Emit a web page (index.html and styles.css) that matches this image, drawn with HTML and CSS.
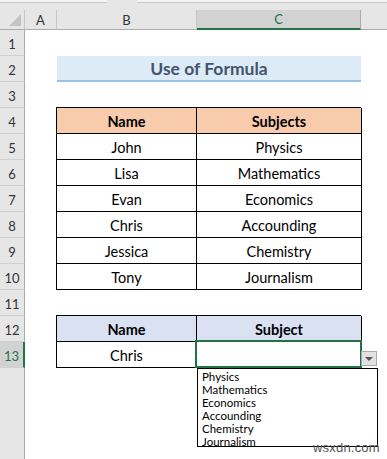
FILE: index.html
```html
<!DOCTYPE html>
<html>
<head>
<meta charset="utf-8">
<link rel="stylesheet" href="styles.css">
</head>
<body>
<div class="app">
  <div class="topstrip"><div class="seg seg1"></div><div class="seg seg2"></div></div>
  <div class="sheet">
    <div class="corner"><span class="tri"></span></div>
    <div class="colhead">A</div>
    <div class="colhead">B</div>
    <div class="colhead active">C</div>
    <div class="colhead last"></div>

    <div class="rownum r1">1</div>
    <div class="rownum r2">2</div>
    <div class="rownum r3">3</div>
    <div class="rownum r4">4</div>
    <div class="rownum r5">5</div>
    <div class="rownum r6">6</div>
    <div class="rownum r7">7</div>
    <div class="rownum r8">8</div>
    <div class="rownum r9">9</div>
    <div class="rownum r10">10</div>
    <div class="rownum r11">11</div>
    <div class="rownum r12">12</div>
    <div class="rownum r13 active">13</div>
    <div class="rownum rest"></div>

    <div class="title">Use of Formula</div>

    <div class="tbl tbl1">
      <div class="cell hd peach">Name</div><div class="cell hd peach">Subjects</div>
      <div class="cell">John</div><div class="cell">Physics</div>
      <div class="cell">Lisa</div><div class="cell">Mathematics</div>
      <div class="cell">Evan</div><div class="cell">Economics</div>
      <div class="cell">Chris</div><div class="cell">Accounding</div>
      <div class="cell">Jessica</div><div class="cell">Chemistry</div>
      <div class="cell">Tony</div><div class="cell">Journalism</div>
    </div>

    <div class="tbl tbl2">
      <div class="cell hd blue">Name</div><div class="cell hd blue">Subject</div>
      <div class="cell">Chris</div><div class="cell selected"></div>
    </div>

    <div class="ddbtn"><span class="ddtri"></span></div>
    <ul class="ddlist">
      <li>Physics</li>
      <li>Mathematics</li>
      <li>Economics</li>
      <li>Accounding</li>
      <li>Chemistry</li>
      <li>Journalism</li>
    </ul>
    <div class="watermark">wsxdn.com</div>
  </div>
</div>
</body>
</html>
```
FILE: styles.css
```css
html, body {
  margin: 0;
  padding: 0;
  background: #ffffff;
}
.app {
  width: 387px;
  height: 459px;
  overflow: hidden;
  font-family: Lato, "Open Sans", sans-serif;
  background: #ffffff;
}
.topstrip {
  height: 10px;
  background: #e6e6e6;
  display: flex;
  gap: 30px;
}
.seg {
  height: 3px;
  background: #f3f3f3;
  border-bottom: 1px solid #c9c9c9;
  box-sizing: border-box;
}
.seg1 { width: 107px; }
.seg2 { flex: 1; }
.sheet {
  position: relative;
  display: grid;
  grid-template-columns: 25px 32px 140px 164px 26px;
  grid-template-rows: 20px repeat(13, 26px) 1fr;
  height: 449px;
}
.corner {
  grid-column: 1;
  grid-row: 1;
  background: #e6e6e6;
  border-right: 1px solid #c6c6c6;
  border-bottom: 1px solid #ababab;
  box-sizing: border-box;
  position: relative;
}
.tri {
  position: absolute;
  right: 3px;
  bottom: 3px;
  width: 0;
  height: 0;
  border-left: 12px solid transparent;
  border-bottom: 12px solid #c3c3c3;
}
.colhead {
  grid-row: 1;
  background: #e6e6e6;
  border-right: 1px solid #c6c6c6;
  border-bottom: 1px solid #ababab;
  box-sizing: border-box;
  font-size: 13px;
  color: #333;
  display: flex;
  align-items: center;
  justify-content: center;
}
.colhead.active {
  background: #d2d2d2;
  border-bottom: 2px solid #217346;
  color: #217346;
  border-right-color: #ababab;
}
.colhead.last {
  border-right: none;
}
.rownum {
  grid-column: 1;
  background: #e6e6e6;
  border-right: 1px solid #ababab;
  border-bottom: 1px solid #d0d0d0;
  box-sizing: border-box;
  font-size: 13px;
  color: #333;
  display: flex;
  align-items: center;
  justify-content: center;
  padding-top: 2px;
}
.r1 { grid-row: 2; }
.r2 { grid-row: 3; }
.r3 { grid-row: 4; }
.r4 { grid-row: 5; }
.r5 { grid-row: 6; }
.r6 { grid-row: 7; }
.r7 { grid-row: 8; }
.r8 { grid-row: 9; }
.r9 { grid-row: 10; }
.r10 { grid-row: 11; }
.r11 { grid-row: 12; }
.r12 { grid-row: 13; }
.r13 { grid-row: 14; }
.rownum.active {
  background: #d2d2d2;
  border-right: 2px solid #217346;
  color: #217346;
}
.rownum.rest {
  grid-row: 15;
  border-bottom: none;
}
.title {
  grid-column: 3 / 5;
  grid-row: 3;
  background: #ddebf7;
  border-bottom: 2px solid #9bc2e6;
  box-sizing: border-box;
  display: flex;
  align-items: center;
  justify-content: center;
  font-weight: 700;
  font-size: 17.5px;
  color: #44546a;
  padding-top: 1px;
}
.tbl {
  grid-column: 3 / 5;
  display: grid;
  grid-template-columns: 140px 165px;
  grid-auto-rows: 26px;
  border-top: 1px solid #000;
  border-left: 1px solid #000;
  margin-left: -1px;
  margin-top: -1px;
  align-self: start;
}
.tbl1 { grid-row: 5 / 12; }
.tbl2 { grid-row: 13 / 15; }
.cell {
  border-right: 1px solid #000;
  border-bottom: 1px solid #000;
  box-sizing: border-box;
  display: flex;
  align-items: center;
  justify-content: center;
  font-size: 14.5px;
  color: #000;
  padding-top: 2px;
}
.cell.hd {
  font-weight: 700;
}
.peach { background: #f8cbad; }
.blue { background: #d9e1f2; }
.cell.selected {
  position: relative;
}
.cell.selected::after {
  content: "";
  position: absolute;
  left: -2px;
  top: -2px;
  right: -1px;
  bottom: -1px;
  border: 2px solid #217346;
}
.ddbtn {
  position: absolute;
  left: 361px;
  top: 341px;
  width: 16px;
  height: 15px;
  box-sizing: border-box;
  background: #e1e1e1;
  border: 1px solid #a9a9a9;
  display: flex;
  align-items: center;
  justify-content: center;
}
.ddtri {
  width: 0;
  height: 0;
  border-left: 4px solid transparent;
  border-right: 4px solid transparent;
  border-top: 4px solid #555;
}
.ddlist {
  position: absolute;
  left: 197px;
  top: 358px;
  width: 181px;
  height: 79px;
  box-sizing: border-box;
  margin: 0;
  padding: 2px 0 0 4px;
  list-style: none;
  background: #fff;
  border: 1px solid #000;
  font-size: 11.5px;
  line-height: 12.9px;
  color: #000;
}
.watermark {
  position: absolute;
  left: 313px;
  top: 430px;
  font-family: "Liberation Sans", Arial, sans-serif;
  font-size: 13px;
  color: #555;
  letter-spacing: 0.2px;
}
```
